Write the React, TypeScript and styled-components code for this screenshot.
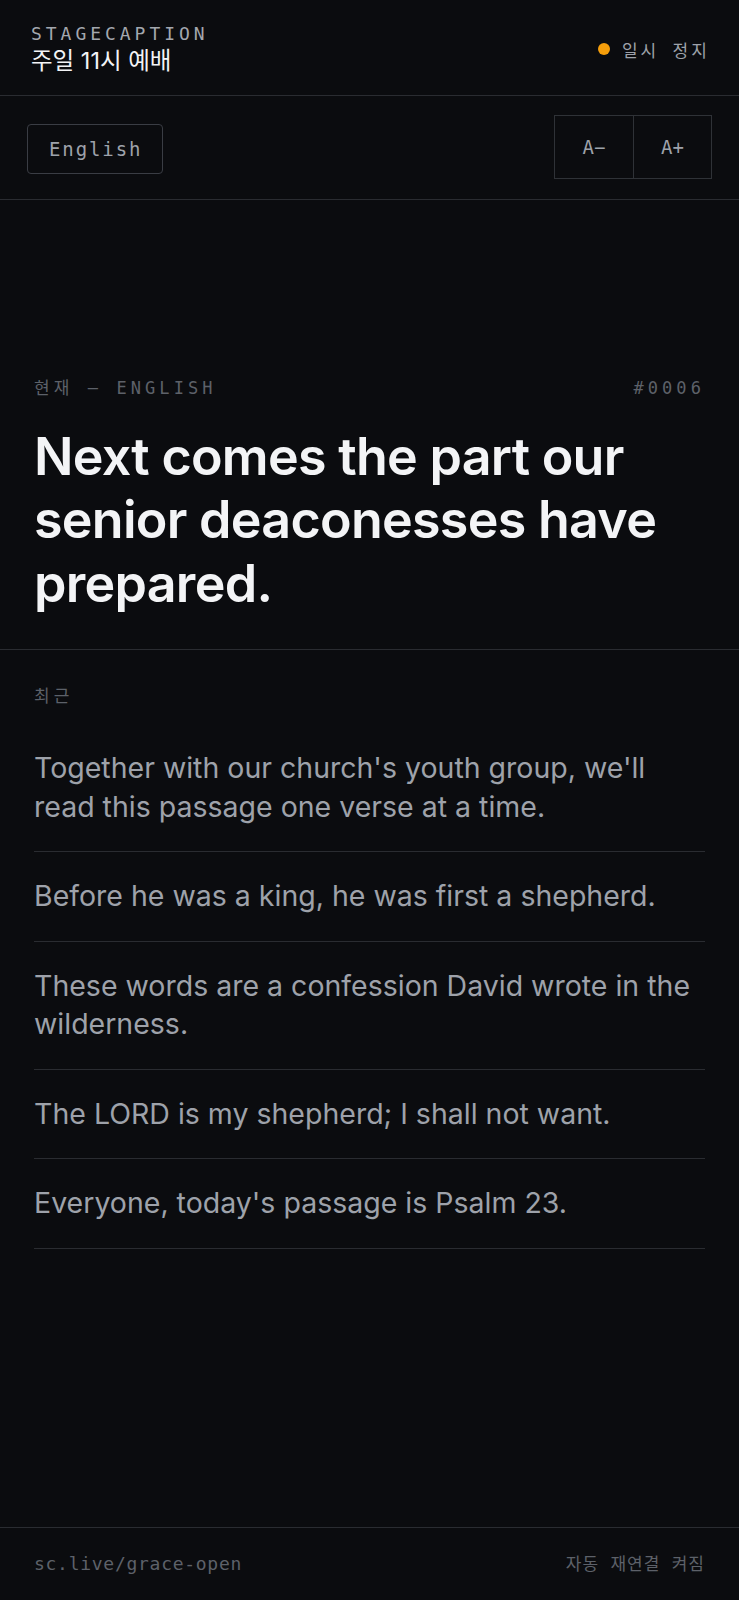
import React, { useState } from 'react';
import styled, { createGlobalStyle } from 'styled-components';

const MONO = `'DejaVu Sans Mono', 'Noto Sans CJK KR', monospace`;
const SANS = `Inter, 'Noto Sans CJK KR', sans-serif`;

const colors = {
  bg: '#0b0c0f',
  line: '#2a2c31',
  dim: '#5d6169',
  muted: '#9ea2aa',
  bright: '#f3f4f6',
  amber: '#f59e0b',
};

const recent = [
  "Together with our church's youth group, we'll read this passage one verse at a time.",
  'Before he was a king, he was first a shepherd.',
  'These words are a confession David wrote in the wilderness.',
  'The LORD is my shepherd; I shall not want.',
  "Everyone, today's passage is Psalm 23.",
];

export default function App() {
  const [size, setSize] = useState(52);

  return (
    <>
      <GlobalStyle />
      <Page>
        <Header>
          <Brand>
            <Wordmark>STAGECAPTION</Wordmark>
            <Title>주일 11시 예배</Title>
          </Brand>
          <Status>
            <Dot />
            일시 정지
          </Status>
        </Header>

        <Controls>
          <LangButton type="button">English</LangButton>
          <SizeGroup>
            <SizeButton type="button" onClick={() => setSize((s) => s - 4)}>
              A−
            </SizeButton>
            <SizeButton type="button" onClick={() => setSize((s) => s + 4)}>
              A+
            </SizeButton>
          </SizeGroup>
        </Controls>

        <Current>
          <Meta>
            <span>현재 — ENGLISH</span>
            <span>#0006</span>
          </Meta>
          <Caption $size={size}>Next comes the part our senior deaconesses have prepared.</Caption>
        </Current>

        <Recent>
          <Meta>최근</Meta>
          <List>
            {recent.map((line) => (
              <Item key={line}>{line}</Item>
            ))}
          </List>
        </Recent>

        <Footer>
          <FooterLink>sc.live/grace-open</FooterLink>
          <FooterNote>자동 재연결 켜짐</FooterNote>
        </Footer>
      </Page>
    </>
  );
}

const GlobalStyle = createGlobalStyle`
  * { box-sizing: border-box; }
  body {
    margin: 0;
    background: ${colors.bg};
    color: ${colors.bright};
    font-family: ${SANS};
  }
`;

const Page = styled.div`
  min-height: 100vh;
  display: flex;
  flex-direction: column;
  background: ${colors.bg};
`;

const Header = styled.header`
  display: flex;
  align-items: center;
  justify-content: space-between;
  padding: 22px 32px 19px 31px;
  border-bottom: 1px solid ${colors.line};
`;

const Brand = styled.div`
  display: flex;
  flex-direction: column;
`;

const Wordmark = styled.div`
  font-family: ${MONO};
  font-size: 18px;
  line-height: 24px;
  letter-spacing: 0.22em;
  color: #a3a7ae;
`;

const Title = styled.div`
  font-family: ${SANS};
  font-size: 23.5px;
  line-height: 30px;
  color: ${colors.bright};
`;

const Status = styled.div`
  display: flex;
  align-items: center;
  gap: 12px;
  font-family: ${MONO};
  font-size: 17px;
  letter-spacing: 0.18em;
  color: ${colors.muted};
  margin-right: -3px;
`;

const Dot = styled.span`
  width: 12px;
  height: 12px;
  border-radius: 50%;
  background: ${colors.amber};
`;

const Controls = styled.div`
  display: flex;
  align-items: center;
  justify-content: space-between;
  padding: 19px 27px 20px;
  border-bottom: 1px solid ${colors.line};
`;

const LangButton = styled.button`
  height: 50px;
  margin-top: 3px;
  padding: 0 20px 0 21px;
  background: transparent;
  border: 1px solid #3a3d44;
  border-radius: 4px;
  font-family: ${MONO};
  font-size: 19px;
  letter-spacing: 0.1em;
  color: ${colors.muted};
  cursor: pointer;
`;

const SizeGroup = styled.div`
  display: flex;
  border: 1px solid #2f3237;
`;

const SizeButton = styled.button`
  width: 78px;
  height: 62px;
  background: transparent;
  border: none;
  font-family: ${MONO};
  font-size: 19px;
  color: ${colors.muted};
  cursor: pointer;
  & + & {
    border-left: 1px solid #2f3237;
  }
`;

const Current = styled.section`
  padding: 176px 34px 34px;
  border-bottom: 1px solid ${colors.line};
`;

const Meta = styled.div`
  display: flex;
  justify-content: space-between;
  font-family: ${MONO};
  font-size: 17px;
  line-height: 24px;
  letter-spacing: 0.24em;
  color: ${colors.dim};
`;

const Caption = styled.h1<{ $size: number }>`
  margin: 25px 0 0;
  font-family: ${SANS};
  font-weight: 600;
  font-size: ${(p) => p.$size}px;
  line-height: 1.22;
  letter-spacing: -0.014em;
  color: ${colors.bright};
`;

const Recent = styled.section`
  flex: 1;
  padding: 34px 34px 0;
`;

const List = styled.ul`
  list-style: none;
  margin: 16px 0 0;
  padding: 0;
`;

const Item = styled.li`
  padding: 25px 0;
  border-bottom: 1px solid ${colors.line};
  font-family: ${SANS};
  font-size: 28.5px;
  line-height: 38.5px;
  color: ${colors.muted};
`;

const Footer = styled.footer`
  display: flex;
  align-items: center;
  justify-content: space-between;
  padding: 24px 34px;
  border-top: 1px solid ${colors.line};
  font-family: ${MONO};
  line-height: 24px;
  color: ${colors.dim};
`;

const FooterLink = styled.span`
  font-size: 18px;
  letter-spacing: 0.04em;
`;

const FooterNote = styled.span`
  font-size: 17px;
  letter-spacing: 0.06em;
`;
